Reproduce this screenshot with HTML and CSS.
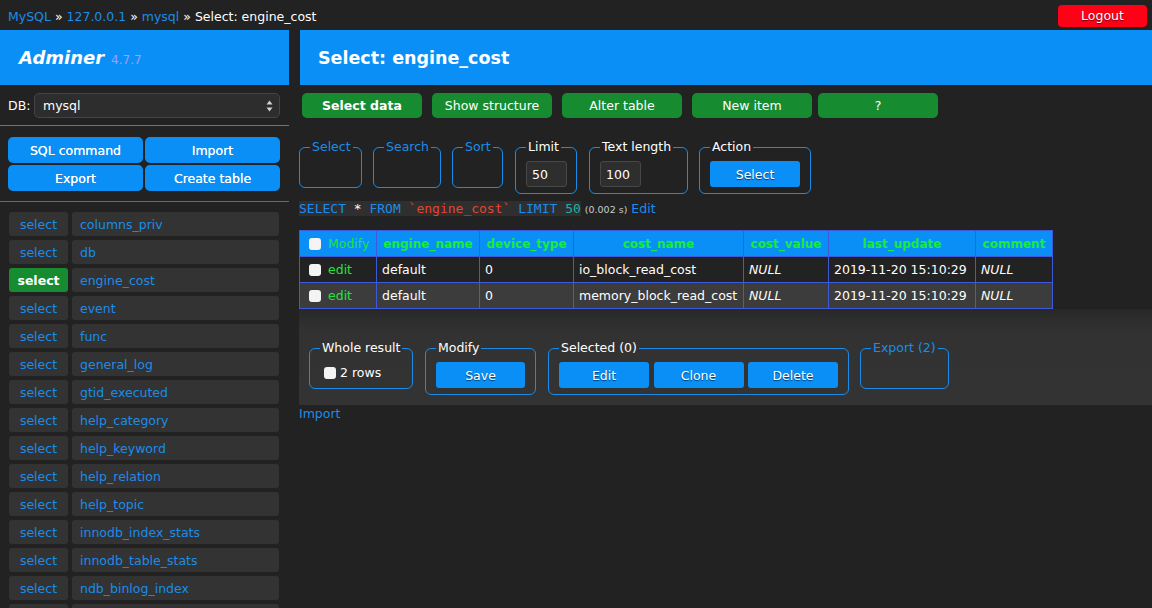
FILE: index.html
```html
<!DOCTYPE html>
<html lang="en">
<head>
<meta charset="utf-8">
<title>Select: engine_cost - Adminer</title>
<link rel="stylesheet" href="styles.css">
</head>
<body>
<div class="topbar">
  <div class="breadcrumb"><a href="#">MySQL</a> » <a href="#">127.0.0.1</a> » <a href="#">mysql</a> » Select: engine_cost</div>
  <button class="logout" type="button">Logout</button>
</div>
<div class="layout">
  <aside class="sidebar">
    <div class="brand"><span class="brand-name">Adminer</span><span class="version">4.7.7</span></div>
    <div class="dbform">
      <span class="dblabel">DB:</span>
      <div class="dbselect"><span>mysql</span>
        <svg class="arrows" width="7" height="12" viewBox="0 0 7 12"><path d="M3.5 0.5 L6.5 4.5 L0.5 4.5 Z M3.5 11.5 L6.5 7.5 L0.5 7.5 Z" fill="#d0d0d0"/></svg>
      </div>
    </div>
    <div class="links">
      <a class="sbtn" href="#">SQL command</a>
      <a class="sbtn" href="#">Import</a>
      <a class="sbtn" href="#">Export</a>
      <a class="sbtn" href="#">Create table</a>
    </div>
    <ul class="tables">
      <li><a class="sel" href="#">select</a><a class="tname" href="#">columns_priv</a></li>
      <li><a class="sel" href="#">select</a><a class="tname" href="#">db</a></li>
      <li><a class="sel active" href="#">select</a><a class="tname" href="#">engine_cost</a></li>
      <li><a class="sel" href="#">select</a><a class="tname" href="#">event</a></li>
      <li><a class="sel" href="#">select</a><a class="tname" href="#">func</a></li>
      <li><a class="sel" href="#">select</a><a class="tname" href="#">general_log</a></li>
      <li><a class="sel" href="#">select</a><a class="tname" href="#">gtid_executed</a></li>
      <li><a class="sel" href="#">select</a><a class="tname" href="#">help_category</a></li>
      <li><a class="sel" href="#">select</a><a class="tname" href="#">help_keyword</a></li>
      <li><a class="sel" href="#">select</a><a class="tname" href="#">help_relation</a></li>
      <li><a class="sel" href="#">select</a><a class="tname" href="#">help_topic</a></li>
      <li><a class="sel" href="#">select</a><a class="tname" href="#">innodb_index_stats</a></li>
      <li><a class="sel" href="#">select</a><a class="tname" href="#">innodb_table_stats</a></li>
      <li><a class="sel" href="#">select</a><a class="tname" href="#">ndb_binlog_index</a></li>
      <li><a class="sel" href="#">select</a><a class="tname" href="#">plugin</a></li>
    </ul>
  </aside>
  <main class="content">
    <div class="pageheader"><h2>Select: engine_cost</h2></div>
    <div class="tabs">
      <a class="tab current" href="#">Select data</a>
      <a class="tab" href="#">Show structure</a>
      <a class="tab" href="#">Alter table</a>
      <a class="tab" href="#">New item</a>
      <a class="tab help" href="#">?</a>
    </div>
    <form class="filters">
      <fieldset class="fs w-select"><legend><a href="#">Select</a></legend><div class="fbody"></div></fieldset>
      <fieldset class="fs w-search"><legend><a href="#">Search</a></legend><div class="fbody"></div></fieldset>
      <fieldset class="fs w-sort"><legend><a href="#">Sort</a></legend><div class="fbody"></div></fieldset>
      <fieldset class="fs w-limit"><legend>Limit</legend><div class="fbody"><input class="num" type="text" value="50"></div></fieldset>
      <fieldset class="fs w-textlen"><legend>Text length</legend><div class="fbody"><input class="num" type="text" value="100"></div></fieldset>
      <fieldset class="fs w-action"><legend>Action</legend><div class="fbody"><button class="bbtn" type="button">Select</button></div></fieldset>
    </form>
    <p class="sql"><code><span class="kw">SELECT</span> * <span class="kw">FROM</span> <span class="id">`engine_cost`</span> <span class="kw">LIMIT</span> <span class="nm">50</span></code> <span class="time">(0.002 s)</span> <a href="#">Edit</a></p>
    <table class="data">
      <colgroup>
        <col class="c1"><col class="c2"><col class="c3"><col class="c4"><col class="c5"><col class="c6"><col class="c7">
      </colgroup>
      <thead>
        <tr>
          <th class="first"><input class="cb" type="checkbox"><span class="modify">Modify</span></th>
          <th>engine_name</th>
          <th>device_type</th>
          <th>cost_name</th>
          <th>cost_value</th>
          <th>last_update</th>
          <th>comment</th>
        </tr>
      </thead>
      <tbody>
        <tr>
          <td><input class="cb" type="checkbox"><a class="edit" href="#">edit</a></td>
          <td>default</td>
          <td>0</td>
          <td>io_block_read_cost</td>
          <td><i>NULL</i></td>
          <td>2019-11-20 15:10:29</td>
          <td><i>NULL</i></td>
        </tr>
        <tr class="odd">
          <td><input class="cb" type="checkbox"><a class="edit" href="#">edit</a></td>
          <td>default</td>
          <td>0</td>
          <td>memory_block_read_cost</td>
          <td><i>NULL</i></td>
          <td>2019-11-20 15:10:29</td>
          <td><i>NULL</i></td>
        </tr>
      </tbody>
    </table>
    <div class="band">
      <fieldset class="fs w-whole"><legend>Whole result</legend><div class="fbody"><label class="rows"><input class="cb" type="checkbox">2 rows</label></div></fieldset>
      <fieldset class="fs w-modify"><legend>Modify</legend><div class="fbody"><button class="bbtn" type="button">Save</button></div></fieldset>
      <fieldset class="fs w-selected"><legend>Selected (0)</legend><div class="fbody"><button class="bbtn" type="button">Edit</button><button class="bbtn" type="button">Clone</button><button class="bbtn" type="button">Delete</button></div></fieldset>
      <fieldset class="fs w-export"><legend><a href="#">Export (2)</a></legend><div class="fbody"></div></fieldset>
    </div>
    <p class="import"><a href="#">Import</a></p>
  </main>
</div>
</body>
</html>
```
FILE: styles.css
```css
* { box-sizing: border-box; }
html, body { margin: 0; height: 100%; }
body {
  background: #222;
  color: #fff;
  font-family: "DejaVu Sans", "Liberation Sans", sans-serif;
  font-size: 12.5px;
  overflow: hidden;
}
a { color: #1b8de9; text-decoration: none; }

.topbar {
  height: 30px;
  display: flex;
  align-items: center;
  justify-content: space-between;
  padding: 0 5px 0 8px;
}
.breadcrumb { line-height: 16px; padding-top: 4px; }
.logout {
  width: 89px;
  height: 22px;
  margin-top: 1px;
  background: #ff0016;
  border: 0;
  border-radius: 4px;
  color: #fff;
  font-family: inherit;
  font-size: 12.5px;
  text-shadow: 0 1px 1px rgba(0,0,0,.6);
}

.layout { display: flex; align-items: flex-start; }

/* Sidebar */
.sidebar { width: 289px; flex: none; }
.brand {
  height: 55px;
  background: #0a8ff7;
  padding-left: 19px;
  display: flex;
  align-items: baseline;
  line-height: 55px;
}
.brand-name { font-weight: bold; font-style: italic; font-size: 18px; color: #fff; }
.version { font-size: 12px; color: #a29ef8; margin-left: 7px; }

.dbform {
  display: flex;
  align-items: center;
  padding: 8px 9px 7px 8px;
  border-bottom: 1px solid #1a8ce8;
}
.dblabel { width: 26px; }
.dbselect {
  width: 246px;
  height: 25px;
  background: #2d2d2d;
  border: 1px solid #454545;
  border-radius: 5px;
  display: flex;
  align-items: center;
  justify-content: space-between;
  padding: 0 6px 0 8px;
}
.arrows { display: block; }

.links {
  display: grid;
  grid-template-columns: 135px 135px;
  gap: 2px;
  padding: 11px 9px 10px 8px;
  border-bottom: 1px solid #1a7dd4;
}
.sbtn {
  height: 26px;
  line-height: 27px;
  background: #0a8ff7;
  border-radius: 5px;
  color: #fff;
  text-align: center;
  text-shadow: 0 0 0.4px #fff;
}

.tables { list-style: none; margin: 0; padding: 10px 0 0 9px; }
.tables li { display: flex; gap: 4px; margin-bottom: 4px; }
.sel {
  width: 59px;
  height: 24px;
  line-height: 25px;
  background: #333;
  border-radius: 3px;
  text-align: center;
}
.sel.active { background: #178b30; color: #fff; font-weight: bold; }
.tname {
  width: 207px;
  height: 24px;
  line-height: 25px;
  background: #333;
  border-radius: 3px;
  padding-left: 8px;
}

/* Content */
.content { flex: 1; margin-left: 10px; min-width: 0; }
.pageheader {
  margin-left: 1px;
  height: 55px;
  background: #0a8ff7;
  padding-left: 18px;
  display: flex;
  align-items: center;
}
.pageheader h2 { margin: 0; font-size: 17.5px; font-weight: bold; color: #fff; }

.tabs { display: flex; padding: 8px 0 0 3px; }
.tab {
  width: 120px;
  height: 25px;
  line-height: 26px;
  background: #178b30;
  border-radius: 5px;
  color: #fff;
  text-align: center;
}
.tab + .tab { margin-left: 10px; }
.tab.help { margin-left: 6px; }
.tab.current { font-weight: bold; }

.filters { display: flex; align-items: flex-start; margin: 22px 0 0; }

.fs {
  margin: 0 11px 0 0;
  padding: 0 10px 6px;
  border: 1px solid #1a8ce8;
  border-radius: 6px;
  min-width: 0;
}
.fs legend { padding: 0 2px; line-height: 14px; white-space: nowrap; }
.fbody { margin-top: 7px; min-height: 20px; display: flex; align-items: center; gap: 4px; }

.w-select { width: 63px; }
.w-search { width: 68px; }
.w-sort { width: 51px; margin-right: 12px; }
.w-limit { width: 62px; margin-right: 12px; }
.w-textlen { width: 99px; }
.w-action { width: 112px; }

.num {
  width: 41px;
  height: 26px;
  background: #2e2e2e;
  border: 1px solid #474747;
  border-radius: 3px;
  color: #fff;
  font-family: inherit;
  font-size: 12.5px;
  padding: 1px 0 0 5px;
}
.bbtn {
  width: 90px;
  height: 26px;
  background: #0a8ff7;
  border: 0;
  border-radius: 3px;
  color: #fff;
  font-family: inherit;
  font-size: 12.5px;
  text-shadow: 0 1px 1px rgba(0,0,0,.6);
  padding: 1px 0 0;
}

.sql { margin: 7px 0 0; line-height: 16px; }
.sql code {
  font-family: "DejaVu Sans Mono", "Liberation Mono", monospace;
  font-size: 13px;
  background: #2f2f2f;
  color: #fff;
}
.kw { color: #1a8cf0; }
.id { color: #e8452c; }
.nm { color: #1db3a1; }
.time { font-size: 9.5px; color: #ccc; }

.data {
  margin-top: 12px;
  border-collapse: collapse;
  table-layout: fixed;
  width: 753px;
  border: 1px solid #3d5bd9;
}
.c1 { width: 77px; } .c2 { width: 103px; } .c3 { width: 94px; } .c4 { width: 170px; }
.c5 { width: 85px; } .c6 { width: 147px; } .c7 { width: 77px; }
.data th, .data td {
  border: 1px solid #3d5bd9;
  height: 26px;
  padding: 0 5px;
  white-space: nowrap;
  overflow: hidden;
}
.data th {
  background: #0a8ff7;
  color: #18ec3e;
  font-weight: bold;
  font-size: 12px;
  text-align: center;
}
.data th.first { text-align: left; font-weight: normal; font-size: 12.5px; }
.data td { background: #222; color: #fff; }
.data tr.odd td { background: #3c3c3c; }
.edit, .modify { color: #1ee53c; }

.cb {
  -webkit-appearance: none;
  appearance: none;
  width: 12px;
  height: 12px;
  background: #f4f4f4;
  border-radius: 3px;
  margin: 0 7px 0 4px;
  vertical-align: -2px;
}

.band {
  display: flex;
  align-items: flex-start;
  padding: 32px 0 10px 10px;
  background: linear-gradient(to bottom, #282828 0, #323232 22px, #333 100%);
}
.w-whole { width: 104px; margin-right: 12px; }
.w-modify { width: 111px; margin-right: 12px; }
.w-selected { width: 301px; }
.w-selected .fbody { gap: 4.5px; }
.w-export { width: 89px; }
.rows .cb { margin: 0 4px 0 4px; }

.import { margin: 1px 0 0; line-height: 16px; }
```
